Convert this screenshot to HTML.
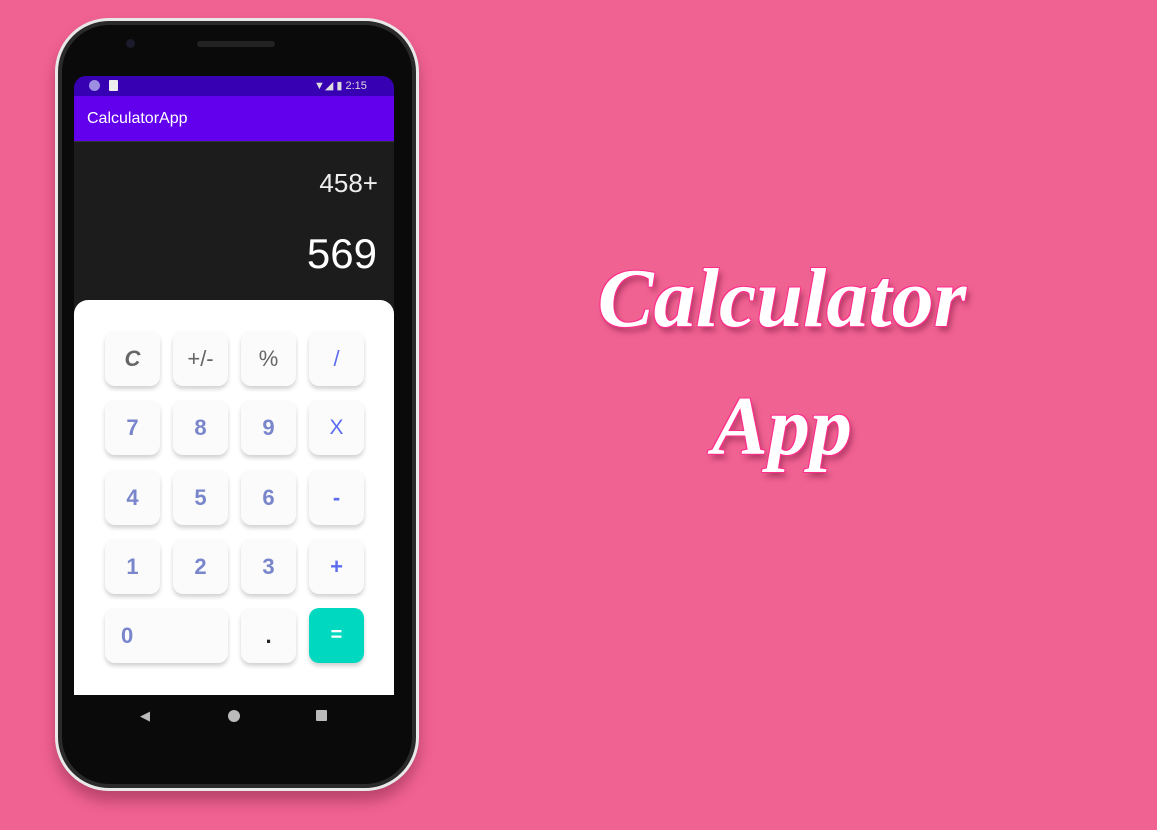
<!DOCTYPE html>
<html><head><style>
*{margin:0;padding:0;box-sizing:border-box}
body{width:1157px;height:830px;background:#F06292;position:relative;overflow:hidden;font-family:"Liberation Sans",sans-serif}
.phone{position:absolute;left:55px;top:18px;width:364px;height:773px;border-radius:54px;background:#0a0a0a;border:3px solid #e8e8e8;box-shadow:0 10px 14px rgba(120,30,60,.45), inset 0 0 0 4px #2a2a2a}
.spk{position:absolute;left:197px;top:41px;width:78px;height:6px;border-radius:3px;background:#222}
.cam{position:absolute;left:126px;top:39px;width:9px;height:9px;border-radius:50%;background:#1a1a2a}
.screen{position:absolute;left:74px;top:76px;width:320px;height:619px;background:#1c1c1c;border-radius:12px 12px 0 0;overflow:hidden}
.sb{height:20px;background:#3700B3;color:#ddd;font-size:11px;position:relative}
.ab{height:46px;background:#6200EE;color:#fff;font-size:16px;padding:14px 0 0 13px;border-bottom:1px solid #333}
.pad{position:absolute;left:0;top:224px;width:320px;height:395px;background:#fff;border-radius:14px 14px 0 0}
.b{position:absolute;width:55px;height:55px;border-radius:10px;background:#fbfbfb;box-shadow:0 3px 4px rgba(0,0,0,.18);font-weight:bold;font-size:22px;color:#7986CB;display:flex;align-items:center;justify-content:center}
.t{position:absolute;color:#fff;font-family:"Liberation Serif",serif;font-style:italic;font-weight:bold;font-size:84px;text-shadow:-1px -1px 0 #ff2d8a,1px -1px 0 #ff2d8a,-1px 1px 0 #ff2d8a,1px 1px 0 #ff2d8a,3px 5px 6px rgba(120,20,60,.5);text-align:center;width:500px;left:532px}
</style></head><body>
<div class="phone"></div>
<div class="cam"></div><div class="spk"></div>
<div class="screen">
 <div class="sb"><span style="position:absolute;left:15px;top:4px;width:11px;height:11px;border-radius:50%;background:#9c8ee0"></span><span style="position:absolute;left:35px;top:4px;width:9px;height:11px;background:#eee;border-radius:1px"></span><span style="position:absolute;left:240px;top:3px;font-size:11px">▼◢ ▮ 2:15</span></div>
 <div class="ab">CalculatorApp</div>
 <div style="position:absolute;right:16px;top:92px;color:#eee;font-size:26px">458+</div>
 <div style="position:absolute;right:17px;top:154px;color:#fff;font-size:42px">569</div>
 <div class="pad">
  <div class="b" style="left:31px;top:31px;color:#666;font-style:italic">C</div>
  <div class="b" style="left:99px;top:31px;color:#666;font-weight:normal">+/-</div>
  <div class="b" style="left:167px;top:31px;color:#666;font-weight:normal;font-size:22px">%</div>
  <div class="b" style="left:235px;top:31px;color:#5c6bf0;font-weight:normal">/</div>
  <div class="b" style="left:31px;top:100px">7</div><div class="b" style="left:99px;top:100px">8</div><div class="b" style="left:167px;top:100px">9</div><div class="b" style="left:235px;top:100px;color:#5c6bf0;font-weight:normal;font-size:21px">X</div>
  <div class="b" style="left:31px;top:170px">4</div><div class="b" style="left:99px;top:170px">5</div><div class="b" style="left:167px;top:170px">6</div><div class="b" style="left:235px;top:170px;color:#5c6bf0">-</div>
  <div class="b" style="left:31px;top:239px">1</div><div class="b" style="left:99px;top:239px">2</div><div class="b" style="left:167px;top:239px">3</div><div class="b" style="left:235px;top:239px;color:#5c6bf0">+</div>
  <div class="b" style="left:31px;top:308px;width:123px;justify-content:flex-start;padding-left:16px">0</div>
  <div class="b" style="left:167px;top:308px;color:#222">.</div>
  <div class="b" style="left:235px;top:308px;background:#00D9C0;color:#fff;font-size:20px">=</div>
 </div>
</div>
<div style="position:absolute;left:140px;top:708px;color:#bbb;font-size:13px">◀</div>
<div style="position:absolute;left:228px;top:710px;width:12px;height:12px;border-radius:50%;background:#bbb"></div>
<div style="position:absolute;left:316px;top:710px;width:11px;height:11px;background:#bbb;border-radius:1px"></div>
<div class="t" style="top:250px">Calculator</div>
<div class="t" style="top:378px">App</div>
</body></html>
